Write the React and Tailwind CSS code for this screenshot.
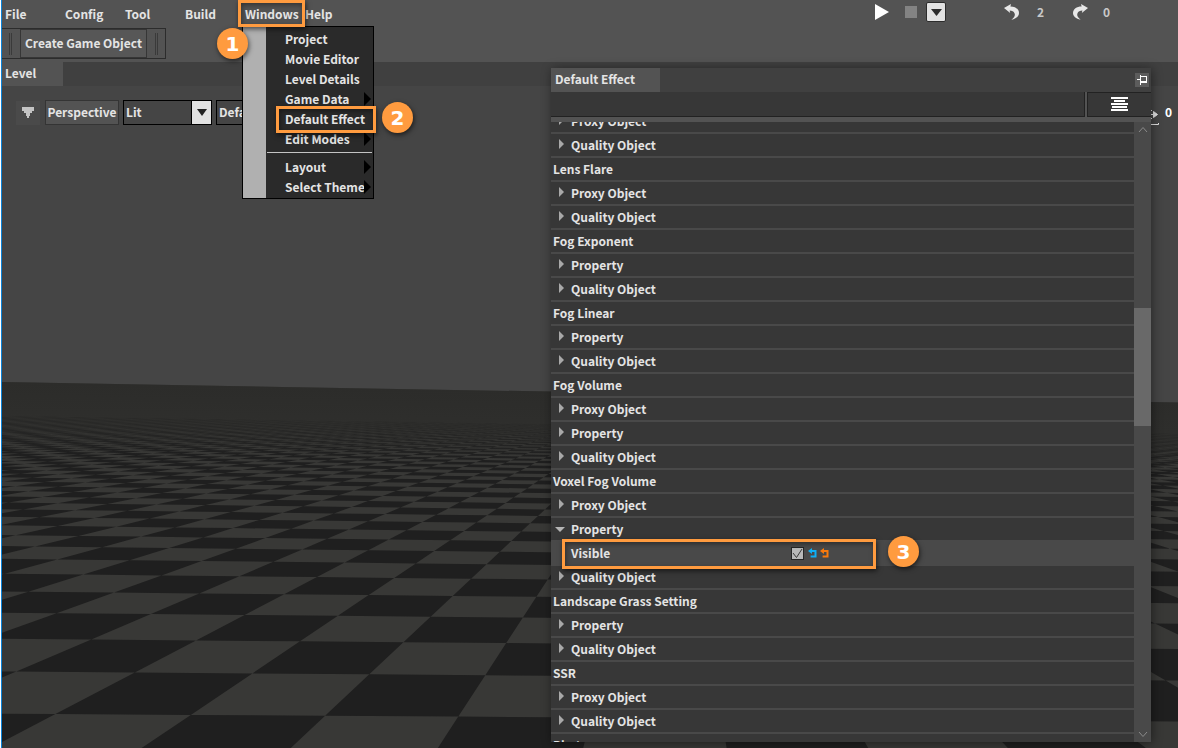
import { useState } from 'react';

const menus = ['File', 'Config', 'Tool', 'Build', 'Windows', 'Help'];

const windowItems = [
  { label: 'Project' },
  { label: 'Movie Editor' },
  { label: 'Level Details' },
  { label: 'Game Data', submenu: true },
  { label: 'Default Effect', marked: true },
  { label: 'Edit Modes', submenu: true },
];

const layoutItems = [
  { label: 'Layout', submenu: true },
  { label: 'Select Theme', submenu: true },
];

const effects = [
  { type: 'node', label: 'Proxy Object' },
  { type: 'node', label: 'Quality Object' },
  { type: 'group', label: 'Lens Flare' },
  { type: 'node', label: 'Proxy Object' },
  { type: 'node', label: 'Quality Object' },
  { type: 'group', label: 'Fog Exponent' },
  { type: 'node', label: 'Property' },
  { type: 'node', label: 'Quality Object' },
  { type: 'group', label: 'Fog Linear' },
  { type: 'node', label: 'Property' },
  { type: 'node', label: 'Quality Object' },
  { type: 'group', label: 'Fog Volume' },
  { type: 'node', label: 'Proxy Object' },
  { type: 'node', label: 'Property' },
  { type: 'node', label: 'Quality Object' },
  { type: 'group', label: 'Voxel Fog Volume' },
  { type: 'node', label: 'Proxy Object' },
  { type: 'node', label: 'Property', open: true },
  { type: 'check', label: 'Visible' },
  { type: 'node', label: 'Quality Object' },
  { type: 'group', label: 'Landscape Grass Setting' },
  { type: 'node', label: 'Property' },
  { type: 'node', label: 'Quality Object' },
  { type: 'group', label: 'SSR' },
  { type: 'node', label: 'Proxy Object' },
  { type: 'node', label: 'Quality Object' },
  { type: 'group', label: 'Photo' },
];

// Projects a point of the ground grid onto the viewport
function project(u, v) {
  const w = 1 + 0.0039 * u + 0.1485 * v;
  const x = (136.1 * u + 99.4 * v + 55.4) / w;
  const y = (3.676 * u + 58.31 * v + 714) / w;
  return `${x.toFixed(1)} ${y.toFixed(1)}`;
}

function buildFloor() {
  let d = '';
  for (let v = -2; v < 60; v++) {
    for (let u = -60; u < 60; u++) {
      if ((u + v) % 2 !== 0) continue;
      d += `M${project(u, v)}L${project(u + 1, v)}L${project(u + 1, v + 1)}L${project(u, v + 1)}Z`;
    }
  }
  return d;
}

const floorPath = buildFloor();

function Scene() {
  return (
    <svg
      className="absolute inset-0 h-full w-full"
      viewBox="2 86 1176 662"
      preserveAspectRatio="xMinYMin slice"
      aria-hidden="true"
    >
      <defs>
        <linearGradient id="haze" gradientUnits="userSpaceOnUse" x1="600" y1="392" x2="598.8" y2="462">
          <stop offset="0" stopColor="#2c2c2a" />
          <stop offset="0.5" stopColor="#2c2c2a" stopOpacity="0.8" />
          <stop offset="1" stopColor="#2c2c2a" stopOpacity="0" />
        </linearGradient>
        <clipPath id="ground">
          <path d="M0 382L1178 402.5V748H0Z" />
        </clipPath>
      </defs>
      <g clipPath="url(#ground)">
        <rect x="0" y="380" width="1178" height="368" fill="#383836" />
        <path d={floorPath} fill="#1f1f1f" />
        <rect x="0" y="380" width="1178" height="100" fill="url(#haze)" />
      </g>
    </svg>
  );
}

function Badge({ children, className }) {
  return (
    <span
      className={`absolute z-30 flex size-[31px] items-center justify-center rounded-full bg-[#ff9b3f]
                  font-['DejaVu_Sans',sans-serif] text-xl font-bold text-white
                  shadow-[1px_2px_5px_rgba(0,0,0,0.6)] ${className}`}
    >
      {children}
    </span>
  );
}

function Marker({ className }) {
  return (
    <span
      className={`pointer-events-none absolute z-20 border-3 border-[#ff9b3f]
                  shadow-[1px_2px_5px_rgba(0,0,0,0.6),inset_1px_2px_5px_rgba(0,0,0,0.4)] ${className}`}
    />
  );
}

function MenuItem({ item }) {
  return (
    <button type="button" className="relative flex h-5 w-full items-center pl-[19px] text-left">
      <span className="whitespace-nowrap">{item.label}</span>
      {item.submenu && (
        <svg className="absolute right-0.5 h-3.5 w-[7px]" viewBox="0 0 7 14" fill="#000">
          <path d="M0 0L7 7L0 14Z" />
        </svg>
      )}
      {item.marked && <Marker className="-right-[3px] -top-[3px] left-[10px] h-[27px]" />}
    </button>
  );
}

function WindowsMenu() {
  return (
    <div className="absolute left-0 top-[26px] z-10 flex w-[132px] border border-black bg-[#2a2a2a]">
      <div className="w-[23px] shrink-0 bg-[#b0b0b0]" />
      <div className="grow pb-px pt-0.5">
        {windowItems.map((item) => (
          <MenuItem key={item.label} item={item} />
        ))}
        <hr className="mx-px mb-1 mt-[3px] border-[#c4c4c4]" />
        {layoutItems.map((item) => (
          <MenuItem key={item.label} item={item} />
        ))}
      </div>
    </div>
  );
}

function Grip() {
  return <span className="h-[22px] w-[3px] border-x border-[#3a3a3a]" />;
}

function CurvedArrow({ className }) {
  return (
    <svg className={`h-4 w-[15px] ${className}`} viewBox="0 0 15 16" fill="#e8e8e8">
      <path d="M0 4L7 0L6.4 2.4C11.4 2.4 15 5 15 9C15 12.2 12 14.8 7.4 15.8C10.2 13.6 11.4 11.6 10.6 9.6C9.8 7.4 8 6.6 5.6 6.6L6.2 9Z" />
    </svg>
  );
}

function PlaybackBar() {
  return (
    <div className="absolute right-0 top-0 flex h-6 w-[305px] items-center text-[#c8c8c8]">
      <button type="button" aria-label="Play" className="ml-0.5 w-[14px]">
        <svg className="h-4 w-[14px]" viewBox="0 0 14 16" fill="#fff">
          <path d="M0 0L14 8L0 16Z" />
        </svg>
      </button>
      <button type="button" aria-label="Stop" className="ml-4 size-3 bg-[#838383]" />
      <button
        type="button"
        aria-label="Play options"
        className="ml-[9px] flex h-5 w-5 items-center justify-center rounded-xs border border-[#2c2c2c] bg-[#e2e2e2]"
      >
        <svg className="h-[7px] w-[11px]" viewBox="0 0 11 7" fill="#2c2c2c">
          <path d="M0 0H11L5.5 7Z" />
        </svg>
      </button>
      <button type="button" aria-label="Undo" className="ml-[58px]">
        <CurvedArrow />
      </button>
      <span className="ml-[18px] w-2">2</span>
      <button type="button" aria-label="Redo" className="ml-7">
        <CurvedArrow className="-scale-x-100" />
      </button>
      <span className="ml-[15px] w-2">0</span>
    </div>
  );
}

function RevertIcon({ color }) {
  return (
    <svg className="h-[10px] w-[9px]" viewBox="0 0 9 10" fill="none" stroke={color} strokeWidth="2">
      <path d="M2 3H7.5V8.5H2.6" />
      <path d="M4 0L0 3L4 6Z" fill={color} stroke="none" />
    </svg>
  );
}

function EffectRow({ row }) {
  const [open, setOpen] = useState(Boolean(row.open));
  const [checked, setChecked] = useState(true);

  if (row.type === 'group') {
    return <h3 className="flex h-6 items-center border-b-2 border-[#494949] pl-0.5">{row.label}</h3>;
  }

  if (row.type === 'check') {
    return (
      <div className="relative -mt-0.5 flex h-[26px] items-center bg-[#494949] pl-5">
        <label htmlFor="visible" className="w-[220px]">{row.label}</label>
        <span className="relative size-[13px] border border-[#262626] bg-[#b8b8b8]">
          <input
            id="visible"
            type="checkbox"
            checked={checked}
            onChange={(e) => setChecked(e.target.checked)}
            className="absolute inset-0 size-full appearance-none"
          />
          {checked && (
            <svg className="pointer-events-none absolute inset-0" viewBox="0 0 11 11" fill="none" stroke="#3a3a3a">
              <path d="M1 5L4.5 9.5L10 1" />
            </svg>
          )}
        </span>
        <button type="button" aria-label="Revert to parent" className="ml-1">
          <RevertIcon color="#0fb0f5" />
        </button>
        <button type="button" aria-label="Revert to default" className="ml-[3px]">
          <RevertIcon color="#f97a0c" />
        </button>
        <Marker className="-bottom-[3px] -top-px left-[11px] w-[314px]" />
        <Badge className="-top-1 left-[337px]">3</Badge>
      </div>
    );
  }

  return (
    <button
      type="button"
      onClick={() => setOpen(!open)}
      className="flex h-6 w-full items-center border-b-2 border-[#494949] text-left"
    >
      <span className="flex w-5 pl-1">
        {open ? (
          <svg className="h-[5px] w-[10px]" viewBox="0 0 10 5" fill="#b5b5b5">
            <path d="M0 0H10L5 5Z" />
          </svg>
        ) : (
          <svg className="mb-0.5 ml-1 h-[10px] w-[5px]" viewBox="0 0 5 10" fill="#a9a9a9">
            <path d="M0 0L5 5L0 10Z" />
          </svg>
        )}
      </span>
      {row.label}
    </button>
  );
}

function EffectPanel() {
  return (
    <section
      className="absolute bottom-1.5 right-[27px] top-[68px] z-20 flex w-[600px] flex-col
                 bg-[#535353] shadow-[1px_1px_10px_rgba(0,0,0,0.45)]"
    >
      <header className="flex h-6 shrink-0 items-center justify-between bg-[#404040] pr-0.5">
        <h2 className="flex h-6 w-[109px] items-center bg-[#535353] pb-0.5 pl-1">Default Effect</h2>
        <button type="button" aria-label="Pin panel" className="size-[14px] bg-[#5c5c5c]">
          <svg className="size-[14px]" viewBox="0 0 14 14" fill="none" stroke="#fff" shapeRendering="crispEdges">
            <path d="M2 6.5H5M5.5 2V12M5.5 3.5H11.5V9" />
            <path d="M5 9H12" strokeWidth="2" />
          </svg>
        </button>
      </header>
      <div className="flex h-[25px] shrink-0 gap-0.5">
        <input
          type="text"
          aria-label="Search effects"
          className="min-w-0 grow border-b border-r border-[#222] bg-[#373737] px-1 outline-none"
        />
        <button
          type="button"
          aria-label="View options"
          className="flex w-16 items-center justify-center border border-r-0 border-[#222] bg-[#373737]"
        >
          <svg className="h-[15px] w-[17px]" viewBox="0 0 17 15" fill="#fff">
            <path d="M0 0H17V2H0ZM3 3H14V5H3ZM0 6H17V8H0ZM1 9H16V11H1ZM0 12H17V14H0Z" />
          </svg>
        </button>
      </div>
      <div className="mt-[5px] flex min-h-0 grow">
        <div className="min-w-0 grow overflow-hidden bg-[#373737]">
          <div className="-mt-3">
            {effects.map((row, index) => (
              <EffectRow key={index} row={row} />
            ))}
          </div>
        </div>
        <div className="flex w-[17px] shrink-0 flex-col items-center bg-[#494949]">
          <svg className="mt-1 h-[7px] w-[10px] shrink-0" viewBox="0 0 10 7" fill="none" stroke="#8a8a8a">
            <path d="M1 6L5 1.5L9 6" />
          </svg>
          <div className="grow-175 basis-0" />
          <div className="w-full grow-118 basis-0 bg-[#696969]" />
          <div className="grow-305 basis-0" />
          <svg className="mb-1 h-[7px] w-[10px] shrink-0" viewBox="0 0 10 7" fill="none" stroke="#8a8a8a">
            <path d="M1 1L5 5.5L9 1" />
          </svg>
        </div>
      </div>
    </section>
  );
}

function ViewportBar() {
  return (
    <div className="relative flex items-center pl-[14px] pt-[14px]">
      <button type="button" aria-label="Viewport options" className="flex h-6 w-6 items-center justify-center bg-[#4a4a4a]">
        <svg className="h-[11px] w-3" viewBox="0 0 12 11" fill="#c4c4c4">
          <path d="M0 0H12V4H10V6H8V9H7V11H5V9H4V6H2V4H0Z" />
        </svg>
      </button>
      <button type="button" className="ml-[5px] h-[25px] w-[74px] border border-[#343434] bg-[#535353] pb-0.5 text-center">
        Perspective
      </button>
      <div className="relative ml-1 h-[25px] w-[89px] border border-black bg-[#454545]">
        <select aria-label="View mode" className="size-full appearance-none pb-0.5 pl-0.5 outline-none">
          <option>Lit</option>
        </select>
        <span className="pointer-events-none absolute inset-y-0 right-0 flex w-5 items-center justify-center border-l border-black bg-[#e2e2e2]">
          <svg className="h-[7px] w-[10px]" viewBox="0 0 10 7" fill="#222">
            <path d="M0 0H10L5 7Z" />
          </svg>
        </span>
      </div>
      <div className="ml-1 h-[25px] w-[89px] border border-black bg-[#454545]">
        <select aria-label="Render buffer" className="size-full appearance-none pb-0.5 pl-0.5 outline-none">
          <option>Default</option>
        </select>
      </div>
      <div className="ml-auto flex h-6 items-center gap-1.5 pr-1.5">
        <svg className="h-6 w-[22px]" viewBox="0 0 22 24" fill="none" stroke="#e6e6e6">
          <path d="M9 13.5H17M16.5 10.5L20.5 13.5L16.5 16.5Z" fill="#e6e6e6" />
          <path d="M13 8L15 10M13 19L15 17" />
          <path d="M4 23.5H21.5V22" />
        </svg>
        <span className="pb-0.5 text-white">0</span>
      </div>
    </div>
  );
}

export default function App() {
  return (
    <div
      className="relative flex h-screen flex-col overflow-hidden border-l border-white bg-[#535353]
                 font-['Noto_Sans_CJK_SC',sans-serif] text-xs font-bold leading-5 text-[#e4e4e4]"
    >
      <div className="flex min-h-0 grow flex-col border-l border-[#0c83d8]">
        <nav className="flex h-7 shrink-0">
          {menus.map((name) => (
            <div key={name} className="relative w-[60px]">
              <button type="button" className="h-7 pl-[3px] text-left">{name}</button>
              {name === 'Windows' && (
                <>
                  <WindowsMenu />
                  <Marker className="-left-1 top-0 h-[27px] w-[67px]" />
                  <Badge className="-left-[25px] top-7">1</Badge>
                </>
              )}
            </div>
          ))}
        </nav>
        <PlaybackBar />

        <div className="flex h-[34px] shrink-0 items-start">
          <div className="flex h-[31px] items-center gap-2 border border-l-0 border-[#2c2c2c] px-[7px]">
            <Grip />
            <button type="button" className="h-[29px] border border-[#363636] bg-[#575757] px-1 pb-0.5">
              Create Game Object
            </button>
            <Grip />
          </div>
        </div>

        <div className="flex h-6 shrink-0 bg-[#404040]">
          <h1 className="flex w-[61px] items-center bg-[#535353] pb-0.5 pl-[3px]">Level</h1>
        </div>

        <main className="relative min-h-0 grow overflow-hidden bg-[#454545]">
          <Scene />
          <ViewportBar />
        </main>
      </div>

      <EffectPanel />
      <Badge className="left-[381px] top-[102px]">2</Badge>
    </div>
  );
}
